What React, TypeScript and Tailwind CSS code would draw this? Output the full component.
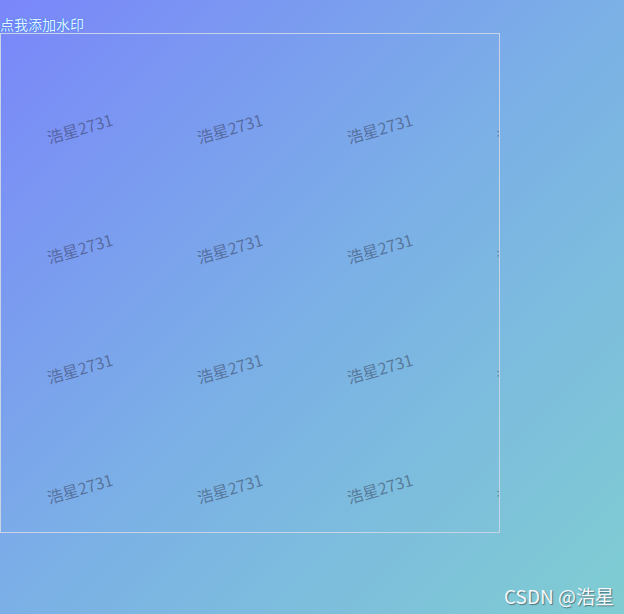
import React from "react";

export default function App() {
  const rows = [0, 1, 2, 3];
  const cols = [0, 1, 2, 3];
  return (
    <div
      className="relative w-[624px] h-[614px] overflow-hidden bg-[linear-gradient(135deg,#7a86fa_0%,#7bb0e6_50%,#7fcdd2_100%)]"
      style={{ fontFamily: '"Noto Sans CJK SC", "Noto Sans", sans-serif' }}
    >
      <div className="pt-[16px]">
        <button className="block h-[17px] px-0 text-[14px] leading-[17px] text-[#e4f3ff] [text-shadow:0_0_1px_#2f7cf0,0_0_1px_#2f7cf0] bg-transparent">
          点我添加水印
        </button>
        <div className="relative w-[500px] h-[500px] border border-[#c9d3e6] overflow-hidden">
          <div className="absolute inset-0 pl-[4px] pt-[34px] flex flex-col pointer-events-none">
            {rows.map((r) => (
              <div key={r} className="flex h-[120px] shrink-0">
                {cols.map((c) => (
                  <div key={c} className="w-[150px] h-[120px] shrink-0 flex items-center justify-center">
                    <span className="block -rotate-[16deg] text-[16px] leading-none text-[rgba(40,40,60,0.45)] whitespace-nowrap">
                      浩星2731
                    </span>
                  </div>
                ))}
              </div>
            ))}
          </div>
        </div>
      </div>
      <div className="absolute right-[10px] bottom-[6px] text-[19px] leading-[24px] text-[#f4f8fa] [text-shadow:1px_1px_1px_rgba(60,80,90,0.7)]">
        CSDN @浩星
      </div>
    </div>
  );
}
